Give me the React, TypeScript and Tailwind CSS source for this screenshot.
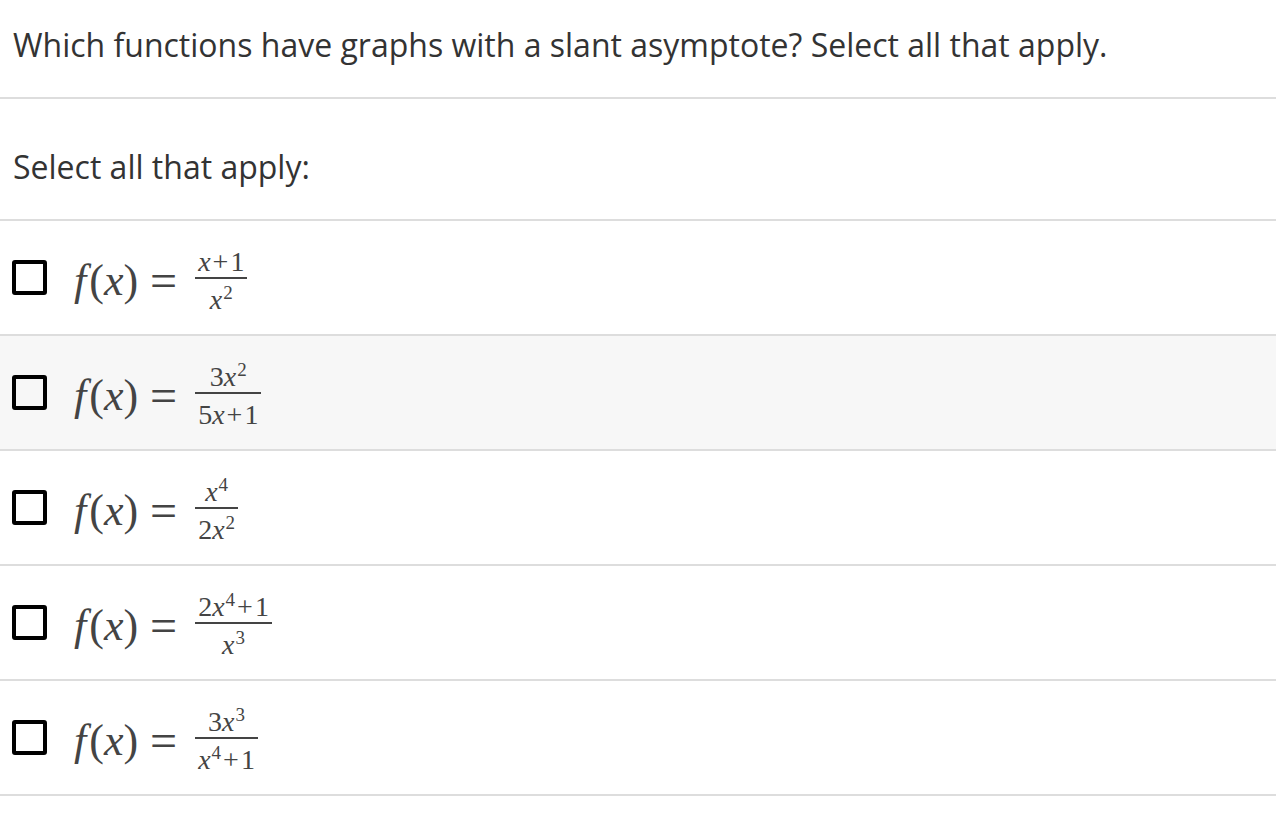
import React from "react";

function Frac({ num, den }: { num: React.ReactNode; den: React.ReactNode }) {
  return (
    <span className="inline-flex flex-col items-center text-[28px]">
      <span className="px-[3px] pt-[11px] pb-[1px] leading-[28px] h-[40px] whitespace-nowrap">{num}</span>
      <span className="self-stretch h-[2px] bg-[#444]" />
      <span className="px-[3px] pt-[7px] leading-[28px] h-[40px] whitespace-nowrap">{den}</span>
    </span>
  );
}

const I = ({ children }: { children: React.ReactNode }) => <span className="italic">{children}</span>;
const Sup = ({ children }: { children: React.ReactNode }) => (
  <sup className="text-[19px] relative top-[-10px] ml-[1px]">{children}</sup>
);
const Plus = () => <span className="mx-[2px]">+</span>;

const rows: { num: React.ReactNode; den: React.ReactNode }[] = [
  { num: <><I>x</I><Plus />1</>, den: <><I>x</I><Sup>2</Sup></> },
  { num: <>3<I>x</I><Sup>2</Sup></>, den: <>5<I>x</I><Plus />1</> },
  { num: <><I>x</I><Sup>4</Sup></>, den: <>2<I>x</I><Sup>2</Sup></> },
  { num: <>2<I>x</I><Sup>4</Sup><Plus />1</>, den: <><I>x</I><Sup>3</Sup></> },
  { num: <>3<I>x</I><Sup>3</Sup></>, den: <><I>x</I><Sup>4</Sup><Plus />1</> },
];

export default function App() {
  return (
    <div className="w-[1276px] min-h-[826px] bg-white text-[#333] font-['Open_Sans','Noto_Sans',sans-serif]">
      <div className="h-[99px] border-b-[2px] border-[#ddd] flex items-center px-[13px] pb-[8px]">
        <p className="text-[32px]">Which functions have graphs with a slant asymptote? Select all that apply.</p>
      </div>
      <div className="h-[122px] border-b-[2px] border-[#ddd] flex items-center px-[13px] pt-[16px]">
        <p className="text-[32px]">Select all that apply:</p>
      </div>
      {rows.map((r, i) => (
        <div
          key={i}
          className={`h-[115px] border-b-[2px] border-[#ddd] flex items-center pl-[12px] ${i === 1 ? "bg-[#f7f7f7]" : "bg-white"}`}
        >
          <span className="w-[35px] h-[35px] border-[4px] border-solid border-black rounded-[3px] shrink-0" />
          <span className="ml-[27px] flex items-center text-[#444] font-['Liberation_Serif','Times_New_Roman',serif]">
            <span className="text-[44px] leading-[44px] pt-[6px] whitespace-nowrap">
              <I>f</I>
              <span className="ml-[3px]">(</span>
              <I>x</I>)
            </span>
            <span className="text-[48px] leading-[44px] pt-[6px] ml-[12px] mr-[18px]">=</span>
            <Frac num={r.num} den={r.den} />
          </span>
        </div>
      ))}
    </div>
  );
}
